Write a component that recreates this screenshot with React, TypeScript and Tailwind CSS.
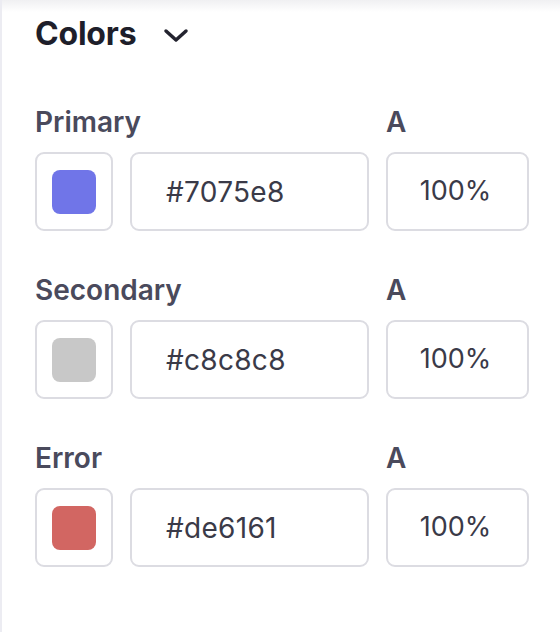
import React from "react";

const rows = [
  { label: "Primary", hex: "#7075e8", swatch: "bg-[#7075e8]" },
  { label: "Secondary", hex: "#c8c8c8", swatch: "bg-[#c8c8c8]" },
  { label: "Error", hex: "#de6161", swatch: "bg-[#d26662]" },
];

function Chevron() {
  return (
    <svg width="26" height="15" viewBox="0 0 26 15" fill="none" className="ml-[27px] mt-[2px]">
      <path d="M3 3 L13 12 L23 3" stroke="#23232f" strokeWidth="3.5" strokeLinecap="round" strokeLinejoin="round" />
    </svg>
  );
}

export default function App() {
  return (
    <div
      className="w-[560px] h-[632px] bg-white border-l-2 border-[#ececf2] relative overflow-hidden"
      style={{ fontFamily: "Inter, 'Noto Sans', sans-serif" }}
    >
      <div className="absolute top-0 left-0 right-0 h-[12px] bg-gradient-to-b from-[#f0f0f2] to-white" />
      <div className="relative pl-[33px] pt-[14px]">
        <div className="flex items-center h-[40px]">
          <span className="text-[32px] font-bold text-[#1e1e2a] tracking-[-0.2px]">Colors</span>
          <Chevron />
        </div>
        <div className="flex flex-col gap-[39px] mt-[48px]">
          {rows.map((r) => (
            <div key={r.label} className="flex flex-col">
              <div className="flex h-[40px] items-center">
                <span className="w-[351px] text-[28px] font-semibold text-[#4a4a5c]">{r.label}</span>
                <span className="text-[28px] font-semibold text-[#4a4a5c]">A</span>
              </div>
              <div className="flex gap-[17px] mt-[10px]">
                <div className="w-[78px] h-[79px] border-2 border-[#dcdce2] rounded-[9px] flex items-center justify-center">
                  <div className={`w-[44px] h-[44px] rounded-[8px] ${r.swatch}`} />
                </div>
                <div className="w-[239px] h-[79px] border-2 border-[#dcdce2] rounded-[9px] flex items-center pl-[34px]">
                  <span className="text-[28px] tracking-[0.3px] text-[#3a3a48]">{r.hex}</span>
                </div>
                <div className="w-[143px] h-[79px] border-2 border-[#dcdce2] rounded-[9px] flex items-center justify-center">
                  <span className="text-[27px] text-[#3a3a48] pr-[4px]">100%</span>
                </div>
              </div>
            </div>
          ))}
        </div>
      </div>
    </div>
  );
}
